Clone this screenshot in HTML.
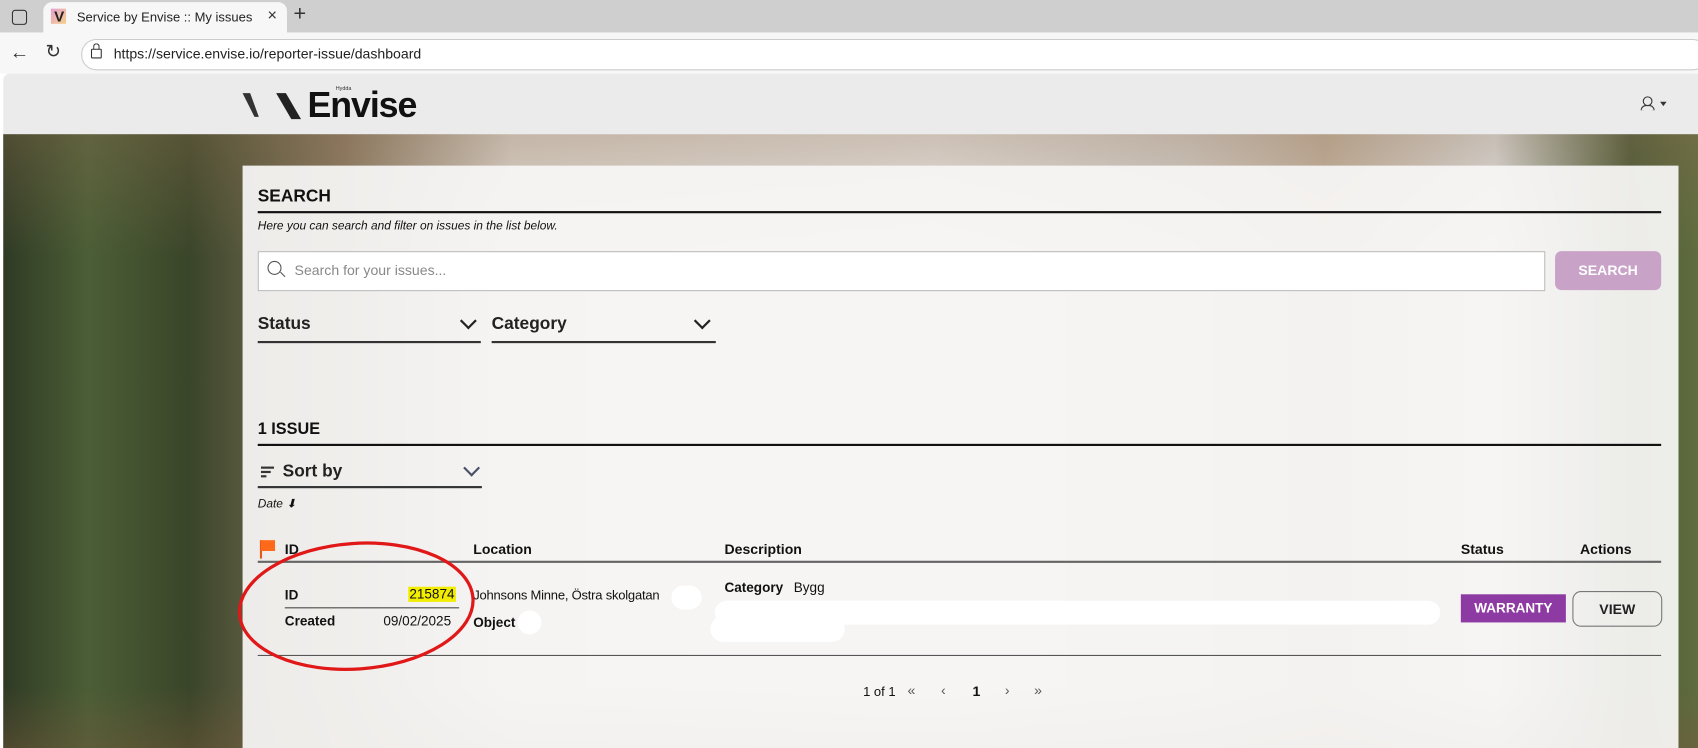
<!DOCTYPE html>
<html><head><meta charset="utf-8"><style>
html,body{margin:0;padding:0;width:1698px;height:748px;overflow:hidden;background:#fff}
#w{width:1568px;height:691px;position:relative;transform:scale(1.0829,1.0825);transform-origin:0 0;font-family:"Liberation Sans",sans-serif;color:#111;overflow:hidden}
.a{position:absolute;white-space:nowrap}
.b{font-weight:bold}
.ln{position:absolute;height:2px;background:#111}
.chev{position:absolute;width:9px;height:9px;border-right:2px solid #222;border-bottom:2px solid #222;transform:rotate(45deg)}
.blob{position:absolute;background:#fff;border-radius:12px}
</style></head><body><div id="w">
<!-- tabs -->
<div class="a" style="left:0;top:0;width:1568px;height:30px;background:#cfcfcf"></div>
<div class="a" style="left:11px;top:9px;width:12px;height:12px;border:1.5px solid #333;border-radius:3px"></div>
<div class="a" style="left:40px;top:2px;width:225px;height:30px;background:#f7f7f7;border-radius:8px 8px 0 0"></div>
<div class="a" style="left:47px;top:8px;width:14px;height:14px;background:linear-gradient(135deg,#e7a0d0,#f5d08a)"></div>
<div class="a" style="left:50px;top:7px;font-size:14px;font-weight:bold;color:#222">V</div>
<div class="a" style="left:71px;top:9px;font-size:12px;color:#222">Service by Envise :: My issues</div>
<div class="a" style="left:247px;top:6px;font-size:15px;color:#333">×</div>
<div class="a" style="left:271px;top:2px;font-size:20px;color:#333">+</div>
<!-- toolbar -->
<div class="a" style="left:0;top:30px;width:1568px;height:38px;background:#f7f7f7"></div>
<div class="a" style="left:9px;top:38px;font-size:18px;color:#333">←</div>
<div class="a" style="left:42px;top:38px;font-size:17px;color:#333">↻</div>
<div class="a" style="left:75px;top:36px;width:1500px;height:27px;background:#fff;border:1px solid #ccc;border-radius:14px"></div>
<div class="a" style="left:84px;top:45px;width:8px;height:7px;border:1.5px solid #333;border-radius:1px"></div>
<div class="a" style="left:86px;top:40px;width:4px;height:5px;border:1.5px solid #333;border-bottom:none;border-radius:3px 3px 0 0"></div>
<div class="a" style="left:105px;top:42px;font-size:13px;color:#222">https://service.envise.io/reporter-issue/dashboard</div>
<!-- page -->
<div class="a" style="left:3px;top:68px;width:1565px;height:56px;background:#ebebeb;border-radius:6px 0 0 0"></div>
<svg class="a" style="left:222px;top:84px" width="70" height="28"><polygon points="2,2 9,2 17,24 13,24" fill="#333"/><polygon points="33,2 42,2 56,26 47,26" fill="#222"/></svg>
<div class="a" style="left:310px;top:79px;font-size:5px;color:#333">Hydda</div>
<div class="a" style="left:284px;top:78px;font-size:33px;color:#111;letter-spacing:-1px;font-weight:bold">Envise</div>
<div class="a" style="left:1517px;top:89px;width:7px;height:7px;border:1.5px solid #333;border-radius:50%"></div>
<div class="a" style="left:1515px;top:97px;width:11px;height:4px;border:1.5px solid #333;border-bottom:none;border-radius:6px 6px 0 0"></div>
<div class="a" style="left:1533px;top:94px;border:3px solid transparent;border-top:4px solid #333"></div>
<!-- background -->
<div class="a" style="left:3px;top:124px;width:1565px;height:567px;background:linear-gradient(90deg,#2f3a24 0%,#4b5e36 5%,#3a4529 11%,#8a7a62 20%,#e2ddd7 30%,#efeceb 55%,#d8d4d0 70%,#c9b8a6 78%,#e6e8ea 88%,#4a5a36 96%,#5f6c3e 100%)"></div>
<div class="a" style="left:3px;top:124px;width:1565px;height:567px;background:linear-gradient(180deg,rgba(140,110,80,.35) 0%,rgba(0,0,0,0) 20%,rgba(0,0,0,0) 90%,rgba(120,90,60,.4) 100%)"></div>
<!-- panel -->
<div class="a" style="left:224px;top:153px;width:1326px;height:540px;background:rgba(246,245,244,.94)"></div>
<div class="a b" style="left:238px;top:173px;font-size:16px">SEARCH</div>
<div class="ln" style="left:238px;top:195px;width:1296px"></div>
<div class="a" style="left:238px;top:203px;font-size:11px;font-style:italic">Here you can search and filter on issues in the list below.</div>
<div class="a" style="left:238px;top:232px;width:1187px;height:35px;background:#fff;border:1px solid #bbb"></div>
<div class="a" style="left:247px;top:241px;width:11px;height:11px;border:1.3px solid #555;border-radius:50%"></div>
<div class="a" style="left:258px;top:253px;width:6px;height:1.3px;background:#555;transform:rotate(45deg)"></div>
<div class="a" style="left:272px;top:242px;font-size:13px;color:#888">Search for your issues...</div>
<div class="a" style="left:1436px;top:232px;width:98px;height:36px;background:#c9a2c8;border-radius:6px;color:#fff;font-weight:bold;font-size:13px;text-align:center;line-height:36px">SEARCH</div>
<div class="a" style="left:238px;top:291px;font-size:16px;font-weight:bold;color:#222">Status</div>
<div class="chev" style="left:427px;top:291px"></div>
<div class="ln" style="left:238px;top:315px;width:206px;background:#333"></div>
<div class="a" style="left:454px;top:291px;font-size:16px;font-weight:bold;color:#222">Category</div>
<div class="chev" style="left:643px;top:291px"></div>
<div class="ln" style="left:454px;top:315px;width:207px;background:#333"></div>
<div class="a b" style="left:238px;top:388px;font-size:15px">1 ISSUE</div>
<div class="ln" style="left:238px;top:410px;width:1296px"></div>
<div class="a" style="left:241px;top:431px;width:12px;height:1.5px;background:#333"></div>
<div class="a" style="left:241px;top:435px;width:9px;height:1.5px;background:#333"></div>
<div class="a" style="left:241px;top:439px;width:5px;height:1.5px;background:#333"></div>
<div class="a" style="left:261px;top:427px;font-size:16px;font-weight:bold;color:#222">Sort by</div>
<div class="chev" style="left:430px;top:427px;border-color:#4a5068"></div>
<div class="ln" style="left:238px;top:449px;width:207px;background:#333"></div>
<div class="a" style="left:238px;top:459px;font-size:11px;font-style:italic">Date ⬇</div>
<!-- table -->
<div class="a" style="left:240px;top:499px;width:1.5px;height:17px;background:#e55a1a"></div>
<div class="a" style="left:241px;top:499px;width:13px;height:10px;background:#ff6a1a"></div>
<div class="a b" style="left:263px;top:500px;font-size:13px">ID</div>
<div class="a b" style="left:437px;top:500px;font-size:13px">Location</div>
<div class="a b" style="left:669px;top:500px;font-size:13px">Description</div>
<div class="a b" style="left:1349px;top:500px;font-size:13px">Status</div>
<div class="a b" style="left:1459px;top:500px;font-size:13px">Actions</div>
<div class="ln" style="left:238px;top:518px;width:1296px;background:#666"></div>
<div class="a b" style="left:263px;top:543px;font-size:12.5px">ID</div>
<div class="a" style="left:377px;top:542px;font-size:12.5px;background:#f2ec00;padding:0 1px">215874</div>
<div class="a" style="left:263px;top:561px;width:161px;height:1px;background:#444"></div>
<div class="a b" style="left:263px;top:567px;font-size:12.5px">Created</div>
<div class="a" style="left:354px;top:567px;font-size:12.5px">09/02/2025</div>
<div class="a" style="left:437px;top:543px;font-size:12px;letter-spacing:-0.2px">Johnsons Minne, Östra skolgatan</div>
<div class="blob" style="left:620px;top:541px;width:28px;height:22px"></div>
<div class="a b" style="left:437px;top:568px;font-size:12.5px">Object</div>
<div class="blob" style="left:478px;top:564px;width:22px;height:22px"></div>
<div class="a b" style="left:669px;top:536px;font-size:12.5px">Category</div>
<div class="a" style="left:733px;top:536px;font-size:12.5px">Bygg</div>
<div class="blob" style="left:660px;top:555px;width:670px;height:22px"></div>
<div class="blob" style="left:656px;top:569px;width:124px;height:24px"></div>
<div class="a" style="left:1349px;top:549px;width:97px;height:26px;background:#8e3aa3;color:#fff;font-weight:bold;font-size:12.5px;text-align:center;line-height:26px">WARRANTY</div>
<div class="a" style="left:1452px;top:546px;width:81px;height:31px;border:1px solid #777;border-radius:8px;font-weight:bold;font-size:13px;text-align:center;line-height:31px;color:#222">VIEW</div>
<div class="a" style="left:238px;top:605px;width:1296px;height:1px;background:#555"></div>
<div class="a" style="left:797px;top:632px;font-size:12px">1 of 1</div>
<div class="a" style="left:838px;top:630px;font-size:13px;color:#555">«</div>
<div class="a" style="left:869px;top:630px;font-size:13px;color:#555">‹</div>
<div class="a b" style="left:898px;top:631px;font-size:13px">1</div>
<div class="a" style="left:928px;top:630px;font-size:13px;color:#555">›</div>
<div class="a" style="left:955px;top:630px;font-size:13px;color:#555">»</div>
<svg class="a" style="left:215px;top:495px" width="230" height="130"><ellipse cx="114" cy="65" rx="108" ry="58" fill="none" stroke="#e01818" stroke-width="3" transform="rotate(-4 114 65)"/></svg>
</div></body></html>
